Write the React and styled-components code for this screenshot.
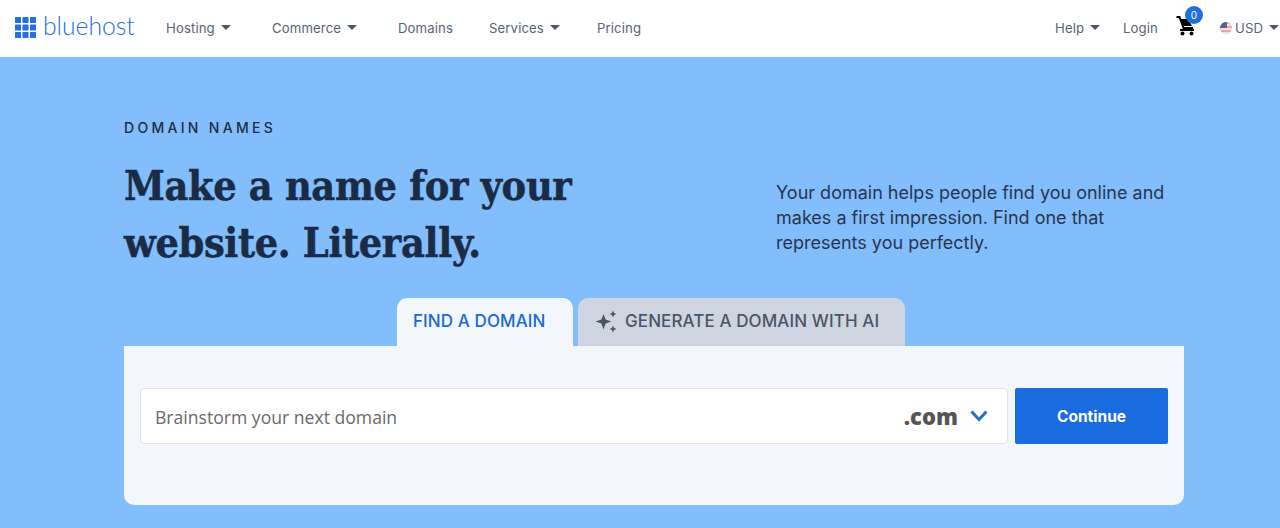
import React from 'react';
import styled, { createGlobalStyle } from 'styled-components';

const GlobalStyle = createGlobalStyle`
    html, body {
        margin: 0;
        padding: 0;
        height: 528px;
        overflow: hidden;
        background: #82bdfc;
        font-family: "Inter", "Liberation Sans", sans-serif;
    }
    * {
        box-sizing: border-box;
    }
`

const Header = styled.header`
    height: 57px;
    background: #ffffff;
    display: flex;
    align-items: center;
    padding: 0 0 2px 15px;
`

const Logo = styled.div`
    display: flex;
    align-items: center;
    gap: 7px;
    width: 151px;
`

const LogoText = styled.span`
    font-family: "Lato", sans-serif;
    font-weight: 300;
    font-size: 24.7px;
    line-height: 1;
    color: #2a6fd0;
    margin-top: -3px;
`

const Nav = styled.nav`
    display: flex;
    align-items: center;
    flex: 1;
`

const NavItem = styled.a`
    display: flex;
    align-items: center;
    gap: 6px;
    font-size: 13.2px;
    color: #5a6474;
    width: ${props => props.$width}px;
    letter-spacing: 0.1px;
`

const Caret = styled.span`
    width: 0;
    height: 0;
    border-left: 5px solid transparent;
    border-right: 5px solid transparent;
    border-top: 5px solid #4d5566;
`

const RightNav = styled.div`
    display: flex;
    align-items: center;
`

const CartWrap = styled.div`
    position: relative;
    width: 43px;
    height: 24px;
    padding-left: 0;
    margin-left: -1px;
    margin-right: 1px;
`

const Badge = styled.span`
    position: absolute;
    top: -10px;
    left: 9px;
    width: 18px;
    height: 18px;
    border-radius: 50%;
    background: #1f6fdc;
    color: #ffffff;
    font-size: 10px;
    line-height: 18px;
    text-align: center;
`

const CurrencyCode = styled.span`
    margin-left: -3px;
`

const Hero = styled.main`
    padding: 0 96px 0 124px;
`

const Eyebrow = styled.div`
    padding-top: 63px;
    font-size: 14px;
    font-weight: 500;
    line-height: 16px;
    letter-spacing: 3.3px;
    color: #1f2d44;
`

const HeroRow = styled.div`
    display: flex;
    height: 162px;
`

const Title = styled.h1`
    width: 652px;
    margin: 22px 0 0;
    font-family: "DejaVu Serif Condensed", "DejaVu Serif", serif;
    font-size: 41px;
    font-weight: 700;
    line-height: 57px;
    letter-spacing: -0.35px;
    -webkit-text-stroke: 0.5px #1c2b45;
    color: #1c2b45;
`

const Intro = styled.p`
    width: 400px;
    margin: 44px 0 0;
    font-size: 18px;
    line-height: 25px;
    color: #27364e;
`

const Tabs = styled.div`
    display: flex;
    gap: 5px;
    padding-left: 273px;
    height: 48px;
`

const Tab = styled.div`
    display: flex;
    align-items: center;
    gap: 7px;
    height: 48px;
    padding: 0 0 2px ${props => props.$active ? 16 : 17}px;
    width: ${props => props.$width}px;
    border-radius: 10px 10px 0 0;
    background: ${props => props.$active ? '#f3f7fb' : '#ced5e0'};
    color: ${props => props.$active ? '#1b68d8' : '#4a5568'};
    font-size: 17px;
    font-weight: 500;
    letter-spacing: 0.1px;
`

const Card = styled.section`
    height: 159px;
    padding: 42px 16px 0;
    border-radius: 0 0 10px 10px;
    background: #f3f7fb;
    display: flex;
    align-items: flex-start;
    gap: 7px;
`

const SearchBox = styled.div`
    flex: 1;
    height: 56px;
    display: flex;
    align-items: center;
    justify-content: space-between;
    padding: 0 19px 0 14px;
    background: #ffffff;
    border: 1px solid #dfe3e8;
    border-radius: 5px;
`

const Placeholder = styled.span`
    font-family: "Open Sans", sans-serif;
    font-size: 17.6px;
    color: #6a6a6a;
    margin-top: 1px;
`

const Tld = styled.div`
    display: flex;
    align-items: center;
    gap: 12px;
    font-family: "Open Sans", sans-serif;
    font-size: 22px;
    font-weight: 800;
    color: #555555;
`

const ContinueButton = styled.button`
    width: 153px;
    height: 56px;
    border: none;
    border-radius: 2px;
    background: #196bde;
    color: #ffffff;
    font-family: "Inter", sans-serif;
    font-size: 15.5px;
    font-weight: 700;
`

function GridIcon() {
    const cells = []
    for (let row = 0; row < 3; row++) {
        for (let col = 0; col < 3; col++) {
            cells.push(<rect key={`${row}-${col}`} x={col * 7.5} y={row * 7.5} width="6" height="6" rx="0.5" />)
        }
    }
    return <svg width="21" height="21" viewBox="0 0 21 21" fill="#2470dc">{cells}</svg>
}

function CartIcon() {
    return (
        <svg width="20" height="20" viewBox="0 0 20 20">
            <path d="M0.5 1 L3.5 1 L7.5 12 L17 12" fill="none" stroke="#000" strokeWidth="2" />
            <path d="M4.5 3 L12 3 L16 10 L7.5 10 Z" fill="#000" />
            <rect x="4" y="13" width="14" height="2" fill="#000" />
            <circle cx="6.5" cy="17.5" r="2" fill="#000" />
            <circle cx="15.5" cy="17.5" r="2" fill="#000" />
        </svg>
    )
}

function FlagIcon() {
    return (
        <svg width="12" height="12" viewBox="0 0 12 12">
            <defs><clipPath id="flag"><circle cx="6" cy="6" r="6" /></clipPath></defs>
            <g clipPath="url(#flag)">
                <rect width="12" height="12" fill="#e8a5a5" />
                <rect y="2" width="12" height="2" fill="#f3e3e3" />
                <rect y="6" width="12" height="2" fill="#f3e3e3" />
                <rect y="10" width="12" height="2" fill="#f3e3e3" />
                <rect width="7" height="6" fill="#56648c" />
            </g>
        </svg>
    )
}

function SparkleIcon() {
    return (
        <svg width="23" height="23" viewBox="0 0 23 23" fill="#4a5568">
            <path d="M8.5 4 L10.6 9.4 L16.5 11.5 L10.6 13.6 L8.5 19.5 L6.4 13.6 L0.5 11.5 L6.4 9.4 Z" />
            <path d="M18 0.5 L19.1 3 L21.5 4 L19.1 5 L18 7.5 L16.9 5 L14.5 4 L16.9 3 Z" />
            <path d="M18 15.5 L19.1 18 L21.5 19 L19.1 20 L18 22.5 L16.9 20 L14.5 19 L16.9 18 Z" />
        </svg>
    )
}

function Chevron() {
    return (
        <svg width="18" height="12" viewBox="0 0 18 12" fill="none" stroke="#2470c8" strokeWidth="3">
            <path d="M1.5 1.5 L9 9.5 L16.5 1.5" />
        </svg>
    )
}

export default function App() {
    return (
        <>
            <GlobalStyle />
            <Header>
                <Logo>
                    <GridIcon />
                    <LogoText>bluehost</LogoText>
                </Logo>
                <Nav>
                    <NavItem $width={106}>Hosting <Caret /></NavItem>
                    <NavItem $width={126}>Commerce <Caret /></NavItem>
                    <NavItem $width={91}>Domains</NavItem>
                    <NavItem $width={108}>Services <Caret /></NavItem>
                    <NavItem $width={60}>Pricing</NavItem>
                </Nav>
                <RightNav>
                    <NavItem $width={68}>Help <Caret /></NavItem>
                    <NavItem $width={54}>Login</NavItem>
                    <CartWrap>
                        <CartIcon />
                        <Badge>0</Badge>
                    </CartWrap>
                    <NavItem $width={60}>
                        <FlagIcon />
                        <CurrencyCode>USD</CurrencyCode>
                        <Caret />
                    </NavItem>
                </RightNav>
            </Header>
            <Hero>
                <Eyebrow>DOMAIN NAMES</Eyebrow>
                <HeroRow>
                    <Title>Make a name for your<br />website. Literally.</Title>
                    <Intro>Your domain helps people find you online and makes a first impression. Find one that represents you perfectly.</Intro>
                </HeroRow>
                <Tabs>
                    <Tab $active $width={176}>FIND A DOMAIN</Tab>
                    <Tab $width={327}><SparkleIcon />GENERATE A DOMAIN WITH AI</Tab>
                </Tabs>
                <Card>
                    <SearchBox>
                        <Placeholder>Brainstorm your next domain</Placeholder>
                        <Tld>.com <Chevron /></Tld>
                    </SearchBox>
                    <ContinueButton>Continue</ContinueButton>
                </Card>
            </Hero>
        </>
    )
}
